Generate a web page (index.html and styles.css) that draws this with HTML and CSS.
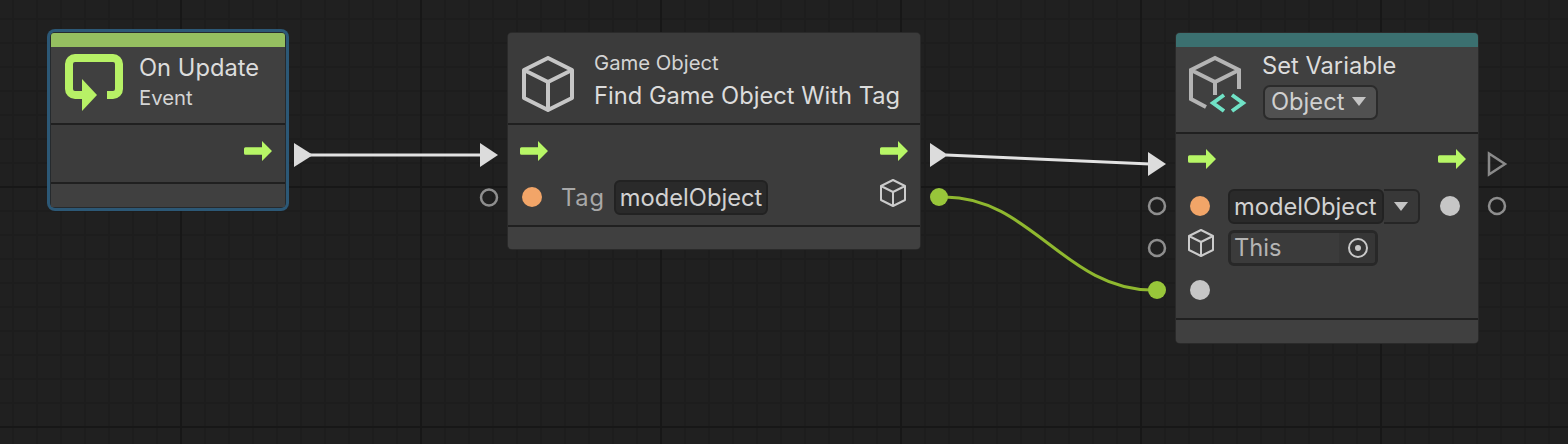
FILE: index.html
```html
<!DOCTYPE html>
<html>
<head>
  <title>flow graph</title>
  <link rel="stylesheet" href="styles.css">
</head>
<body>
  <svg class="defs" width="0" height="0">
    <symbol id="flow" viewBox="0 0 28 20">
      <path d="M1.5 6.2H18V0L28 10 18 20V13.8H1.5A1.5 1.5 0 0 1 0 12.3V7.7A1.5 1.5 0 0 1 1.5 6.2Z"/>
    </symbol>
    <symbol id="cube" viewBox="0 0 52 56">
      <path d="M26 2 50 14V42L26 54 2 42V14ZM2 14 26 26 50 14M26 26V54"/>
    </symbol>
  </svg>

  <div class="canvas">
    <!-- connections and outer ports -->
    <svg class="wires" width="1568" height="444">
      <path class="wire-white" d="M310 155H482"/>
      <path class="wire-white" d="M946 155 1150 164"/>
      <path class="wire-green" d="M945 197C1030 197 1066 290 1152 290"/>

      <path class="tri" d="M294 143 313 155 294 167Z"/>
      <path class="tri" d="M480 143 498 155 480 167Z"/>
      <path class="tri" d="M930 143 948 155 930 167Z"/>
      <path class="tri" d="M1148 152 1166 164 1148 176Z"/>
      <path class="tri-open" d="M1489 153.500 1505 164 1489 174.500Z"/>

      <circle class="port" cx="489" cy="197.500" r="8"/>
      <circle class="port" cx="1157" cy="206" r="8"/>
      <circle class="port" cx="1157" cy="248" r="8"/>
      <circle class="port" cx="1497" cy="206" r="8"/>
      <circle class="port-on" cx="939" cy="197" r="9"/>
      <circle class="port-on" cx="1157" cy="290" r="9"/>
    </svg>

    <div class="node node-event selected">
      <div class="bar bar-green"></div>
      <div class="head head-event">
        <svg class="icon-update" width="62" height="62" viewBox="0 0 62 62">
          <path class="loop" d="M44 43H50A6 6 0 0 0 56 37V12A6 6 0 0 0 50 6H12A6 6 0 0 0 6 12V37A6 6 0 0 0 12 43H22"/>
          <path class="loop-tip" d="M19 27 34 43 19 59Z"/>
        </svg>
        <div class="titles">
          <div class="title">On Update</div>
          <div class="sub">Event</div>
        </div>
      </div>
      <div class="body">
        <div class="row row-end">
          <span></span>
          <svg class="flow"><use href="#flow"/></svg>
        </div>
      </div>
      <div class="foot"></div>
    </div>

    <div class="node node-find">
      <div class="head head-find">
        <svg class="cube-big" width="52" height="56"><use href="#cube"/></svg>
        <div class="titles">
          <div class="sub sub-top">Game Object</div>
          <div class="title">Find Game Object With Tag</div>
        </div>
      </div>
      <div class="body">
        <div class="row">
          <svg class="flow"><use href="#flow"/></svg>
          <svg class="flow"><use href="#flow"/></svg>
        </div>
        <div class="row row-gap">
          <div class="group">
            <span class="dot dot-orange"></span>
            <span class="label">Tag</span>
            <span class="field">modelObject</span>
          </div>
          <svg class="cube-small cube-out" width="26" height="28"><use href="#cube"/></svg>
        </div>
      </div>
      <div class="foot"></div>
    </div>

    <div class="node node-set">
      <div class="bar bar-teal"></div>
      <div class="head head-set">
        <svg class="icon-var" width="60" height="60" viewBox="0 0 60 60">
          <path class="var-cube" d="M17 52 2 44V15L26 3 50 15V34M2 15 26 27 50 15M26 27V40"/>
          <path class="var-code" d="M35 40 24 48 35 56M43 40 54 48 43 56"/>
        </svg>
        <div class="titles">
          <div class="title title-set">Set Variable</div>
          <div class="select">Object<i class="caret"></i></div>
        </div>
      </div>
      <div class="body body-set">
        <div class="row">
          <svg class="flow"><use href="#flow"/></svg>
          <svg class="flow"><use href="#flow"/></svg>
        </div>
        <div class="row row-first">
          <div class="group">
            <span class="dot dot-orange"></span>
            <span class="combo">
              <span class="field field-combo">modelObject</span>
              <span class="combo-btn"><i class="caret"></i></span>
            </span>
          </div>
          <span class="dot dot-gray dot-right"></span>
        </div>
        <div class="row row-tight">
          <div class="group group-cube">
            <svg class="cube-small" width="26" height="28"><use href="#cube"/></svg>
            <span class="objfield">
              <span class="objname">This</span>
              <span class="objpick"><i class="target"></i></span>
            </span>
          </div>
        </div>
        <div class="row row-tight">
          <span class="dot dot-gray"></span>
        </div>
      </div>
      <div class="foot"></div>
    </div>
  </div>
</body>
</html>
```

FILE: styles.css
```css
html, body {
  margin: 0;
  height: 100%;
  overflow: hidden;
  background: #202020;
}
* {
  box-sizing: border-box;
}
.defs {
  position: absolute;
}
.canvas {
  position: relative;
  width: 1568px;
  height: 444px;
  font-family: Inter, "Liberation Sans", sans-serif;
  color: #d8d8d8;
  background-color: #202020;
  background-image:
    repeating-linear-gradient(90deg, transparent 0 180px, #171717 180px 182px, transparent 182px 240px),
    repeating-linear-gradient(0deg, transparent 0 16px, #171717 16px 18px, transparent 18px 240px),
    repeating-linear-gradient(90deg, transparent 0 12px, #1d1d1d 12px 14px, transparent 14px 24px),
    repeating-linear-gradient(180deg, transparent 0 18px, #1d1d1d 18px 20px, transparent 20px 24px);
}
.wires {
  position: absolute;
  left: 0;
  top: 0;
  filter: blur(0.4px);
}
.wire-white {
  fill: none;
  stroke: #e2e2e2;
  stroke-width: 3;
}
.wire-green {
  fill: none;
  stroke: #8fb82f;
  stroke-width: 3;
}
.tri {
  fill: #dcdcdc;
}
.tri-open {
  fill: none;
  stroke: #8a8a8a;
  stroke-width: 2.500;
}
.port {
  fill: none;
  stroke: #8e8e8e;
  stroke-width: 2.500;
}
.port-on {
  fill: #98c63a;
}

/* nodes sit on the free canvas */
.node {
  position: absolute;
  display: flex;
  flex-direction: column;
  background: #3c3c3c;
  border-radius: 4px;
  box-shadow: 0 0 0 1px #2a2a2a;
  overflow: hidden;
}
.node-event {
  left: 51px;
  top: 33px;
  width: 234px;
  height: 174px;
}
.node.selected {
  overflow: visible;
  box-shadow: 0 0 0 1px #262a2d, 0 0 0 4px #2c5876;
}
.node-find {
  left: 508px;
  top: 33px;
  width: 412px;
  height: 216px;
}
.node-set {
  left: 1176px;
  top: 33px;
  width: 302px;
  height: 310px;
}
.bar {
  height: 14px;
  flex: none;
}
.bar-green {
  background: #95bf60;
  border-radius: 3px 3px 0 0;
}
.bar-teal {
  background: #3b7070;
}
.head {
  display: flex;
  flex: none;
  align-items: flex-start;
  background: #404040;
  border-bottom: 2px solid #202020;
}
.head-event {
  height: 78px;
  padding: 5px 0 0 12px;
}
.head-find {
  height: 92px;
  padding: 23px 0 0 14px;
  background: #3b3b3b;
}
.head-set {
  height: 87px;
  padding: 8px 0 0 13px;
}
.titles {
  display: flex;
  flex-direction: column;
}
.head-event .titles {
  margin-left: 14px;
  padding-top: 2px;
}
.head-find .titles {
  margin-left: 20px;
  margin-top: -5px;
}
.head-set .titles {
  margin-left: 13px;
  margin-top: -3px;
}
.title {
  font-size: 23.700px;
  line-height: 28px;
  color: #dcdcdc;
}
.head-find .title {
  line-height: 30px;
  margin-top: 6px;
}
.sub {
  font-size: 20.300px;
  line-height: 24px;
  margin-top: 4px;
  color: #d4d4d4;
}
.sub-top {
  margin-top: 0;
  line-height: 24px;
}
.select {
  display: flex;
  align-items: center;
  gap: 8px;
  width: 115px;
  height: 35px;
  margin-top: 5px;
  margin-left: 1px;
  padding: 0 0 2px 6px;
  font-size: 23.700px;
  color: #d0d0d0;
  background: #515151;
  border: 2px solid #2b2b2b;
  border-radius: 7px;
}
.caret {
  display: block;
  width: 0;
  height: 0;
  border-left: 7px solid transparent;
  border-right: 7px solid transparent;
  border-top: 9px solid #c4c4c4;
}
.icon-update {
  flex: none;
  filter: blur(0.5px);
}
.loop {
  fill: none;
  stroke: #b7f166;
  stroke-width: 8;
}
.loop-tip {
  fill: #b7f166;
}
.icon-var {
  flex: none;
  filter: blur(0.6px);
}
.var-cube {
  fill: none;
  stroke: #b4b4b4;
  stroke-width: 4;
}
.var-code {
  fill: none;
  stroke: #70e2c6;
  stroke-width: 4;
}
.cube-big use {
  fill: none;
  stroke: #c6c6c6;
  stroke-width: 4;
  stroke-linejoin: round;
}
.cube-small use {
  fill: none;
  stroke: #cccccc;
  stroke-width: 4;
  stroke-linejoin: round;
}
.cube-out {
  margin: 0 2px 8px 0;
}
.body {
  flex: 1;
  padding: 8px 12px 0;
  border-bottom: 2px solid #202020;
}
.body-set {
  padding-top: 7px;
}
.foot {
  height: 22px;
  flex: none;
  background: #404040;
}
.node-event .foot,
.node-set .foot {
  height: 23px;
}
.row {
  display: flex;
  align-items: center;
  justify-content: space-between;
  height: 36px;
}
.row-end {
  padding-right: 1px;
}
.row-gap {
  margin-top: 10px;
}
.row-first {
  margin-top: 11px;
}
.row-tight {
  margin-top: 6px;
}
.flow {
  width: 28px;
  height: 20px;
  fill: #b7f666;
}
.group {
  display: flex;
  align-items: center;
}
.dot {
  display: block;
  flex: none;
  width: 20px;
  height: 20px;
  border-radius: 50%;
  margin-left: 2px;
}
.dot-orange {
  background: #f2a568;
}
.dot-gray {
  background: #c6c6c6;
}
.dot-right {
  margin-right: 6px;
}
.label {
  margin-left: 19px;
  font-size: 23.700px;
  letter-spacing: 0.8px;
  color: #a8a8a8;
}
.field {
  display: block;
  height: 35px;
  line-height: 32px;
  padding: 0 4px;
  margin-left: 9px;
  font-size: 23.700px;
  color: #d2d2d2;
  background: #2a2a2a;
  border: 2px solid #222222;
  border-radius: 6px;
}
.combo {
  display: flex;
  margin-left: 18px;
}
.field-combo {
  margin-left: 0;
  width: 156px;
}
.combo-btn {
  display: flex;
  align-items: center;
  justify-content: center;
  width: 36px;
  height: 35px;
  background: #383838;
  border: 2px solid #262626;
  border-left: 0;
  border-radius: 0 6px 6px 0;
}
.group-cube .cube-small {
  flex: none;
  margin-bottom: 10px;
}
.objfield {
  display: flex;
  width: 150px;
  height: 36px;
  margin-left: 14px;
  background: #3b3b3b;
  border: 3px solid #282828;
  border-radius: 6px;
  overflow: hidden;
}
.objname {
  flex: 1;
  padding-left: 3px;
  font-size: 23.700px;
  line-height: 30px;
  color: #b4b4b4;
}
.objpick {
  display: flex;
  align-items: center;
  justify-content: center;
  width: 36px;
  padding-left: 2px;
  background: #363636;
}
.target {
  position: relative;
  display: block;
  width: 20px;
  height: 20px;
  border: 2px solid #c8c8c8;
  border-radius: 50%;
}
.target::after {
  content: "";
  position: absolute;
  left: 5px;
  top: 5px;
  width: 6px;
  height: 6px;
  background: #c8c8c8;
  border-radius: 50%;
}
```
